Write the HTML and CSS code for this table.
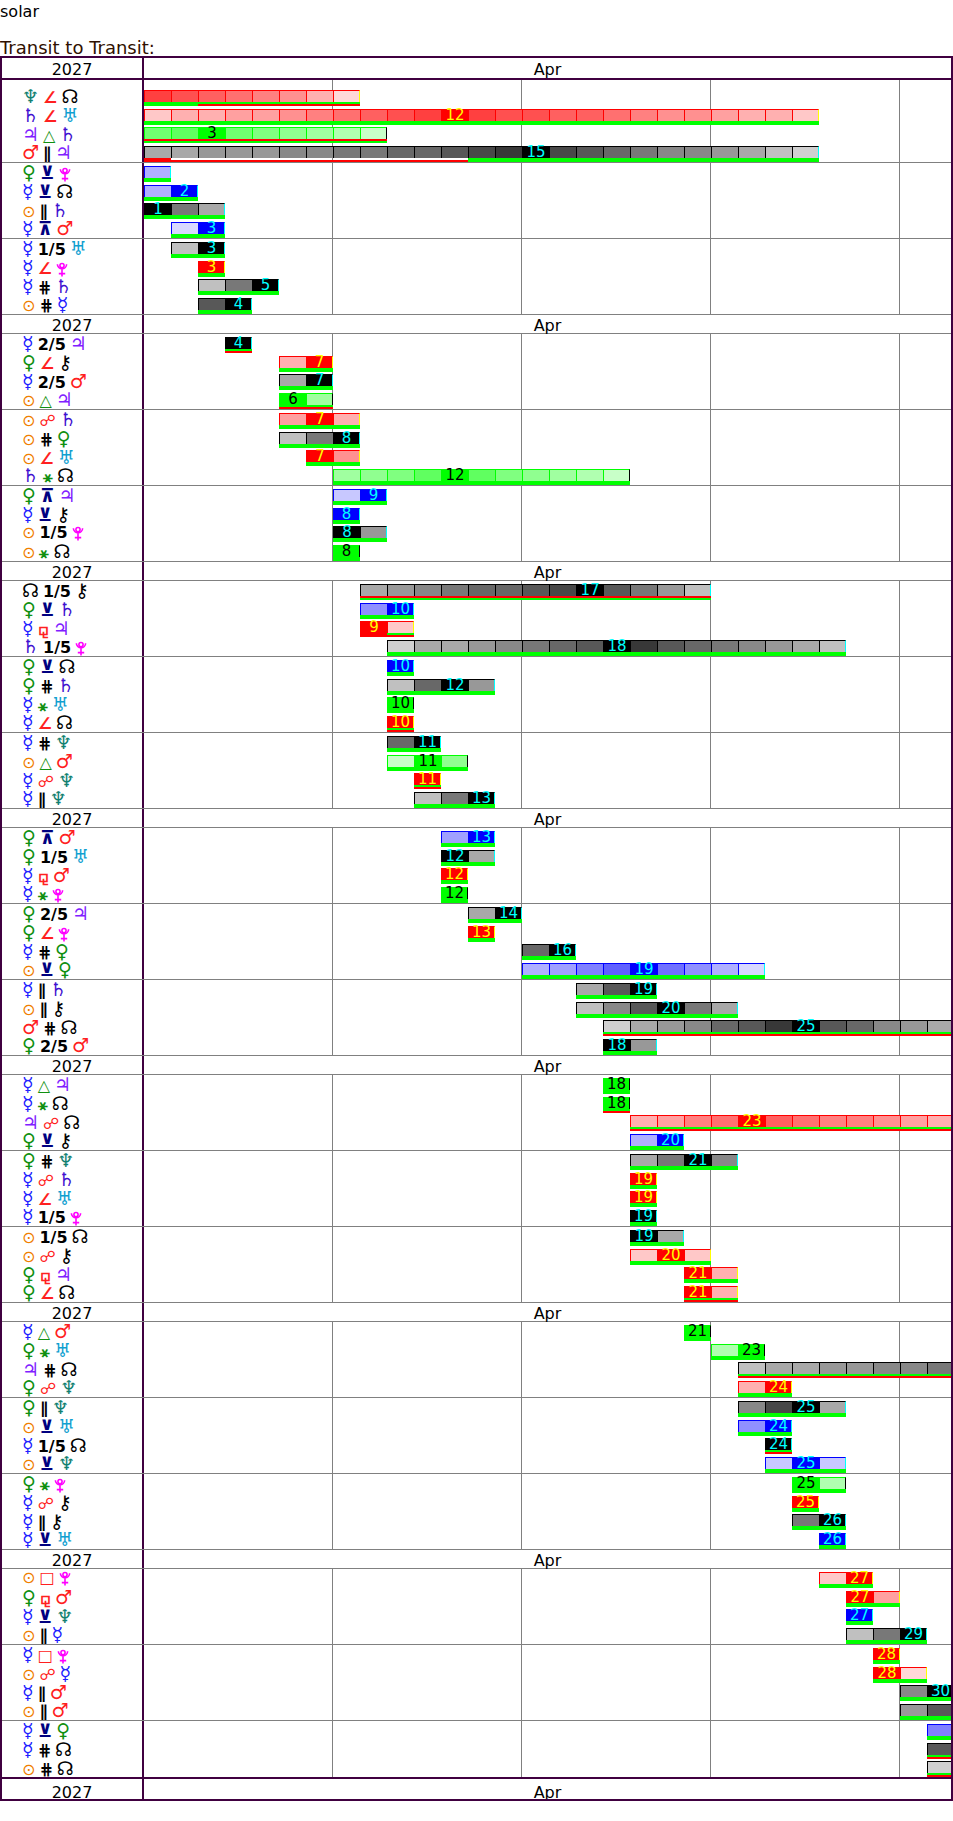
FILE: index.html
```
<!DOCTYPE html>
<html lang="en">
<head>
<meta charset="utf-8">
<title>solar</title>
<link rel="stylesheet" href="styles.css">
</head>
<body>
<div class="solar">solar</div>
<div class="heading">Transit to Transit:</div>
<div class="chart" id="chart"></div>
<script src="script.js"></script>
</body>
</html>
```

FILE: styles.css
```
html, body { margin: 0; padding: 0; background: #fff; }
body { font-family: "DejaVu Sans", "Noto Sans", sans-serif; font-size: 16px; color: #000; }

.solar { height: 37px; padding-top: 3px; line-height: 18px; }
.heading { height: 16px; line-height: 16px; font-size: 18px; color: #301000; white-space: nowrap; }

.chart { width: 953px; box-sizing: border-box; border: 2px solid #400040; overflow: hidden; }

.head { display: grid; grid-template-columns: 142px 1fr; height: 18px; border-bottom: 1px solid #808080; }
.head .yr, .head .mo { text-align: center; padding-top: 3px; line-height: 15px; white-space: nowrap; }
.head .yr { border-right: 2px solid #400040; }
.head.first { height: 20px; border-bottom: 2px solid #400040; }
.head.first .yr, .head.first .mo { padding-top: 4px; line-height: 16px; }
.head.last { height: 20px; border-top: 2px solid #400040; border-bottom: 0; }
.head.last .yr, .head.last .mo { padding-top: 8px; line-height: 12px; }

.group { display: grid; grid-template-columns: 142px 1fr; border-bottom: 1px solid #808080; }
.group.end { border-bottom: 0; }
.group.first .labels, .group.first .plot { padding-top: 7px; }
.labels { border-right: 2px solid #400040; padding-left: 20px; }
.lab { height: 18.75px; line-height: 18.75px; white-space: nowrap; font-weight: bold; overflow: visible; }
.lab span { margin-right: 4px; }
.lab .pg { font-size: 19px; }
.lab .pg.g-su { font-size: 16px; font-weight: normal; }
.lab .ag { font-size: 16px; }
.lab .ag.a-ssx, .lab .ag.a-qcx { font-size: 18px; }
.pluto { display: inline-block; width: 12px; height: 15px; vertical-align: -3px; }
.pluto svg { display: block; width: 12px; height: 15px; }

.plot { background-image: repeating-linear-gradient(90deg, transparent 0 188px, #808080 188px 189px); }
.brow { height: 18.75px; display: grid; grid-template-columns: repeat(30, 27px); align-items: end; }
.bar { display: flex; }
.cell { width: 27px; flex: none; }
.fill { height: 12px; box-sizing: border-box; border-top: 1px solid; border-left: 1px solid; font-size: 15px; font-weight: normal; line-height: 11px; text-align: center; white-space: nowrap; }
.cell:last-child .fill { border-right: 1px solid; }
.strip { height: 4px; }

.t-k .fill { border-color: #000; color: #00ffff; }
.t-b .fill { border-color: #0000ff; color: #00ffff; }
.t-r .fill { border-color: #ff0000; color: #ffff00; }
.t-g .fill { border-color: #00ff00; color: #000; }

.s-g { background: #00ff00; }
.s-r { background: #ff0000; }
.s-x { background: linear-gradient(#00ff00 0 50%, #ff0000 50% 100%); }
.s-y { background: linear-gradient(#ff0000 0 50%, #00ff00 50% 100%); }
.s-z { background: linear-gradient(transparent 0 50%, #ff0000 50% 100%); }

/* planet glyph colours */
.g-su { color: #f08000; }
.g-me { color: #2020ff; }
.g-ve { color: #109010; }
.g-ma { color: #ff2020; }
.g-ju { color: #8020ff; }
.g-sa { color: #4010d0; }
.g-ur { color: #10a0d0; }
.g-ne { color: #108070; }
.g-pl { color: #ff00ff; }
.g-no { color: #000; }
.g-ch { color: #000; }

/* aspect glyph colours */
.a-ssq, .a-opp, .a-sqr, .a-ses { color: #ff2020; }
.a-tri, .a-sxt { color: #109010; }
.a-ssx, .a-qcx { color: #000080; }
.a-par, .a-cpa, .a-qui, .a-bqi { color: #000; }
```

FILE: script.js
```
(function () {
  var P = { su: '\u2299', me: '\u263F', ve: '\u2640', ma: '\u2642', ju: '\u2643', sa: '\u2644', ur: '\u2645', ne: '\u2646', pl: '\u2647', no: '\u260A', ch: '\u26B7' };
  var A = { ssq: '\u2220', tri: '\u25B3', par: '\u2225', ssx: '\u22BB', qcx: '\u22BC', qui: '1/5', bqi: '2/5', cpa: '\u22D5', opp: '\u260D', sxt: '\u26B9', sqr: '\u25A1', ses: '\u26BC' };
  var PLUTO = '<svg viewBox="0 0 12 15" aria-hidden="true"><circle cx="6" cy="3.6" r="2.1" fill="none" stroke="currentColor" stroke-width="1.6"/>' +
    '<path d="M1.4 2.2 A4.6 4.6 0 0 0 10.6 2.2 M6 6.9 V14.6 M2.8 11.6 H9.2" fill="none" stroke="currentColor" stroke-width="1.6"/></svg>';
  var GL = [0, 56, 72, 88, 104, 120, 136, 152, 168, 192, 208];
  var CL = [0, 64, 80, 96, 112, 128, 144, 160, 176, 200, 216];

  function fillColor(t, v) {
    var l;
    if (t === 'k') { l = GL[v]; return 'rgb(' + l + ',' + l + ',' + l + ')'; }
    l = CL[v];
    if (t === 'r') return 'rgb(255,' + l + ',' + l + ')';
    if (t === 'g') return 'rgb(' + l + ',255,' + l + ')';
    return 'rgb(' + l + ',' + l + ',255)';
  }

  // [planet1, aspect, planet2, type, start day, shade per day (0 = exact), strip]
  var S = [
    [
      [['ne','ssq','no','r',1,'1234568a','ggxxxxxx'],
       ['sa','ssq','ur','r',1,'9887765432101223345667889'],
       ['ju','tri','sa','g',1,'430456789','y'],
       ['ma','par','ju','k',1,'887776655443210234566789a','rzzzzzzzzzzzggggggggggggg']],
      [['ve','ssx','pl','b',1,'8'],
       ['me','ssx','no','b',1,'80'],
       ['su','par','sa','k',1,'058'],
       ['me','qcx','ma','b',2,'a0']],
      [['me','qui','ur','k',2,'90'],
       ['me','ssq','pl','r',3,'0'],
       ['me','cpa','sa','k',3,'950'],
       ['su','cpa','me','k',3,'30']]
    ],
    [
      [['me','bqi','ju','k',4,'0','x'],
       ['ve','ssq','ch','r',6,'80'],
       ['me','bqi','ma','k',6,'80'],
       ['su','tri','ju','g',6,'07','x']],
      [['su','opp','sa','r',6,'708'],
       ['su','cpa','ve','k',6,'950'],
       ['su','ssq','ur','r',7,'06'],
       ['sa','sxt','no','g',8,'76530356789']],
      [['ve','qcx','ju','b',8,'90'],
       ['me','ssx','ch','b',8,'0'],
       ['su','qui','pl','k',8,'07'],
       ['su','sxt','no','g',8,'0']]
    ],
    [
      [['no','qui','ch','k',9,'8765443203579','y'],
       ['ve','ssx','sa','b',9,'60'],
       ['me','ses','ju','r',9,'09','rx'],
       ['sa','qui','pl','k',10,'a8876543013456789']],
      [['ve','ssx','no','b',10,'0'],
       ['ve','cpa','sa','k',10,'9407'],
       ['me','sxt','ur','g',10,'0'],
       ['me','ssq','no','r',10,'0','x']],
      [['me','cpa','ne','k',10,'40'],
       ['su','tri','ma','g',10,'906'],
       ['me','opp','ne','r',11,'0','x'],
       ['me','par','ne','k',11,'950']]
    ],
    [
      [['ve','qcx','ma','b',12,'70'],
       ['ve','qui','ur','k',12,'08'],
       ['me','ses','ma','r',12,'0'],
       ['me','sxt','pl','g',12,'0']],
      [['ve','bqi','ju','k',13,'80'],
       ['ve','ssq','pl','r',13,'0'],
       ['me','cpa','ve','k',15,'40'],
       ['su','ssx','ve','b',15,'87530468a']],
      [['me','par','sa','k',17,'830'],
       ['su','par','ch','k',17,'963058'],
       ['ma','cpa','no','k',18,'a876431034678','x'],
       ['ve','bqi','ma','k',18,'07']]
    ],
    [
      [['me','tri','ju','g',18,'0'],
       ['me','sxt','no','g',18,'0','x'],
       ['ju','opp','no','r',19,'875403455678','x'],
       ['ve','ssx','ch','b',19,'80']],
      [['ve','cpa','ne','k',19,'8506'],
       ['me','opp','sa','r',19,'0'],
       ['me','ssq','ur','r',19,'0'],
       ['me','qui','pl','k',19,'0']],
      [['su','qui','no','k',19,'08'],
       ['su','opp','ch','r',19,'909'],
       ['ve','ses','ju','r',21,'08'],
       ['ve','ssq','no','r',21,'08','x']]
    ],
    [
      [['me','tri','ma','g',21,'0'],
       ['ve','sxt','ur','g',22,'80'],
       ['ju','cpa','no','k',23,'98877665','x'],
       ['ve','opp','ne','r',23,'80']],
      [['ve','par','ne','k',23,'6208'],
       ['su','ssx','ur','b',23,'60'],
       ['me','qui','no','k',24,'0','x'],
       ['su','ssx','ne','b',24,'909']],
      [['ve','sxt','pl','g',25,'08'],
       ['me','opp','ch','r',25,'0'],
       ['me','par','ch','k',25,'50'],
       ['me','ssx','ur','b',26,'0']]
    ],
    [
      [['su','sqr','pl','r',26,'90'],
       ['ve','ses','ma','r',27,'07'],
       ['me','ssx','ne','b',27,'0'],
       ['su','par','me','k',27,'950']],
      [['me','sqr','pl','r',28,'0'],
       ['su','opp','me','r',28,'0a'],
       ['me','par','ma','k',29,'60'],
       ['su','par','ma','k',29,'73']],
      [['me','ssx','ve','b',30,'5'],
       ['me','cpa','no','k',30,'3','x'],
       ['su','cpa','no','k',30,'a','x']]
    ]
  ];

  var chart = document.getElementById('chart');

  function el(tag, cls, txt) {
    var e = document.createElement(tag);
    if (cls) e.className = cls;
    if (txt != null) e.textContent = txt;
    return e;
  }

  function planet(p) {
    if (p === 'pl') {
      var s = el('span', 'pg pluto g-pl');
      s.innerHTML = PLUTO;
      return s;
    }
    return el('span', 'pg g-' + p, P[p]);
  }

  function head(kind) {
    var h = el('div', 'head' + (kind ? ' ' + kind : ''));
    h.appendChild(el('div', 'yr', '2027'));
    h.appendChild(el('div', 'mo', 'Apr'));
    return h;
  }

  S.forEach(function (sec, si) {
    chart.appendChild(head(si === 0 ? 'first' : ''));
    sec.forEach(function (grp, gi) {
      var g = el('div', 'group');
      if (si === 0 && gi === 0) g.classList.add('first');
      if (si === S.length - 1 && gi === sec.length - 1) g.classList.add('end');
      var labs = el('div', 'labels');
      var plot = el('div', 'plot');
      grp.forEach(function (r) {
        var p1 = r[0], a = r[1], p2 = r[2], t = r[3], start = r[4], sh = r[5], st = r[6];
        var lab = el('div', 'lab');
        lab.appendChild(planet(p1));
        lab.appendChild(el('span', 'ag a-' + a, A[a]));
        lab.appendChild(planet(p2));
        labs.appendChild(lab);

        var row = el('div', 'brow');
        var bar = el('div', 'bar t-' + t);
        bar.style.gridColumn = start + ' / span ' + sh.length;
        for (var i = 0; i < sh.length; i++) {
          var v = parseInt(sh.charAt(i), 16);
          var c = el('div', 'cell');
          var f = el('div', 'fill');
          f.style.backgroundColor = fillColor(t, v);
          if (v === 0) f.textContent = String(start + i);
          var sc = st ? (st.length === 1 ? st : st.charAt(i)) : 'g';
          c.appendChild(f);
          c.appendChild(el('div', 'strip s-' + sc));
          bar.appendChild(c);
        }
        row.appendChild(bar);
        plot.appendChild(row);
      });
      g.appendChild(labs);
      g.appendChild(plot);
      chart.appendChild(g);
    });
  });
  chart.appendChild(head('last'));
})();
```
